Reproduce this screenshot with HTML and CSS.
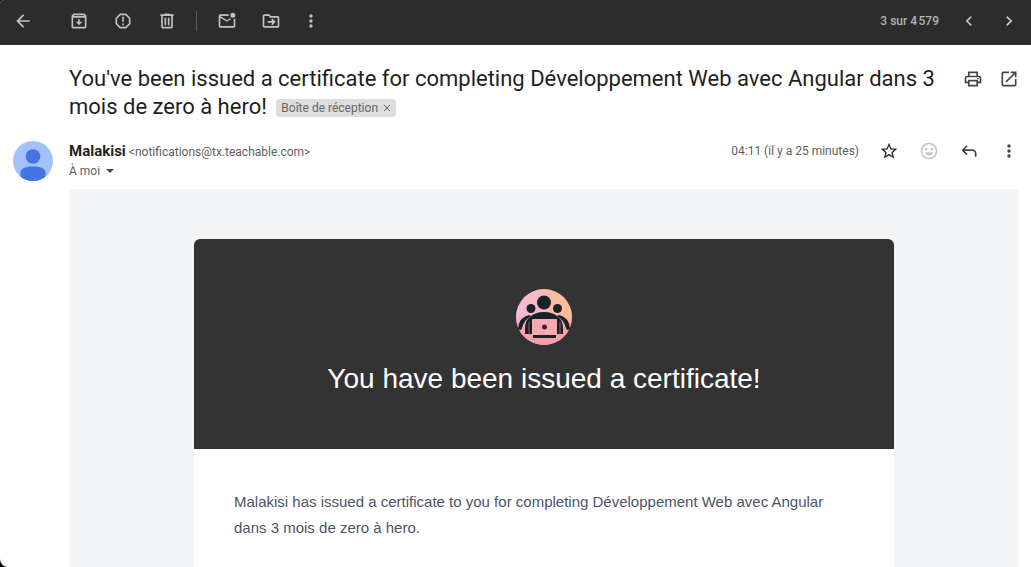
FILE: index.html
```html
<!DOCTYPE html>
<html lang="fr">

<head>
    <meta charset="UTF-8">
    <meta name="viewport" content="width=device-width, initial-scale=1.0">
    <title>Boîte de réception</title>
    <link rel="stylesheet" href="styles.css">
</head>

<body>
    <div class="window">
        <header class="toolbar">
            <button class="icon-btn back" aria-label="Retour">
                <svg viewBox="0 0 24 24"><path d="M20 11H7.83l5.59-5.59L12 4l-8 8 8 8 1.41-1.41L7.83 13H20v-2z"/></svg>
            </button>
            <button class="icon-btn" aria-label="Archiver">
                <svg viewBox="0 0 24 24"><path d="M20.54 5.23l-1.39-1.68C18.88 3.21 18.47 3 18 3H6c-.47 0-.88.21-1.16.55L3.46 5.23C3.17 5.57 3 6.02 3 6.5V19c0 1.1.9 2 2 2h14c1.1 0 2-.9 2-2V6.5c0-.48-.17-.93-.46-1.27zM6.24 5h11.52l.83 1H5.42l.82-1zM5 19V8h14v11H5zm8-9h-2v3H8l4 4 4-4h-3v-3z"/></svg>
            </button>
            <button class="icon-btn" aria-label="Signaler comme spam">
                <svg viewBox="0 0 24 24"><path d="M15.73 3H8.27L3 8.27v7.46L8.27 21h7.46L21 15.73V8.27L15.73 3zM19 14.9L14.9 19H9.1L5 14.9V9.1L9.1 5h5.8L19 9.1v5.8zM11 7h2v6h-2zm0 8h2v2h-2z"/></svg>
            </button>
            <button class="icon-btn" aria-label="Supprimer">
                <svg viewBox="0 0 24 24"><path d="M15 4V3H9v1H4v2h1v13c0 1.1.9 2 2 2h10c1.1 0 2-.9 2-2V6h1V4h-5zm2 15H7V6h10v13zM9 8h2v9H9zm4 0h2v9h-2z"/></svg>
            </button>
            <span class="separator"></span>
            <button class="icon-btn" aria-label="Marquer comme non lu">
                <svg viewBox="0 0 24 24"><path d="M22 8.98V18c0 1.1-.9 2-2 2H4c-1.1 0-2-.9-2-2V6c0-1.1.9-2 2-2h10.1a5 5 0 0 0 0 2H4l8 5 3.67-2.29c.47.43 1.02.76 1.63.98L12 13 4 8v10h16V9.9c.74-.15 1.42-.48 2-.92zM16 5a3 3 0 1 0 6 0 3 3 0 0 0-6 0z"/></svg>
            </button>
            <button class="icon-btn" aria-label="Déplacer vers">
                <svg viewBox="0 0 24 24"><path d="M20 6h-8l-2-2H4c-1.1 0-2 .9-2 2v12c0 1.1.9 2 2 2h16c1.1 0 2-.9 2-2V8c0-1.1-.9-2-2-2zm0 12H4V6h5.17l2 2H20v10zm-7.84-2.01L13.59 17 17.59 13l-4-4-1.42 1.41L13.76 12H8v2h5.76l-1.6 1.99z"/></svg>
            </button>
            <button class="icon-btn narrow" aria-label="Plus">
                <svg viewBox="0 0 24 24"><path d="M12 8c1.1 0 2-.9 2-2s-.9-2-2-2-2 .9-2 2 .9 2 2 2zm0 2c-1.1 0-2 .9-2 2s.9 2 2 2 2-.9 2-2-.9-2-2-2zm0 6c-1.1 0-2 .9-2 2s.9 2 2 2 2-.9 2-2-.9-2-2-2z"/></svg>
            </button>
            <nav class="pager">
                <span class="count">3 sur 4&#8239;579</span>
                <button class="icon-btn" aria-label="Plus récent">
                    <svg viewBox="0 0 24 24"><path d="M15.41 7.41L14 6l-6 6 6 6 1.41-1.41L10.83 12z"/></svg>
                </button>
                <button class="icon-btn" aria-label="Plus ancien">
                    <svg viewBox="0 0 24 24"><path d="M10 6L8.59 7.41 13.17 12l-4.58 4.59L10 18l6-6z"/></svg>
                </button>
            </nav>
        </header>

        <main class="mail">
            <div class="subject-row">
                <div class="subject-box">
                    <h1 class="subject">You've been issued a certificate for completing Développement Web avec Angular dans 3 mois de zero à hero!</h1>
                    <span class="label">Boîte de réception <button class="label-close" aria-label="Retirer le libellé"><svg viewBox="0 0 8 8"><path d="M1 1l6 6M7 1L1 7"/></svg></button></span>
                </div>
                <div class="subject-actions">
                    <button class="icon-btn" aria-label="Imprimer">
                        <svg viewBox="0 0 24 24"><path d="M19 8h-1V3H6v5H5c-1.66 0-3 1.34-3 3v6h4v4h12v-4h4v-6c0-1.66-1.34-3-3-3zM8 5h8v3H8V5zm8 14H8v-4h8v4zm2-4v-2H6v2H4v-4c0-.55.45-1 1-1h14c.55 0 1 .45 1 1v4h-2z"/><circle cx="18" cy="11.5" r="1"/></svg>
                    </button>
                    <button class="icon-btn" aria-label="Nouvelle fenêtre">
                        <svg viewBox="0 0 24 24"><path d="M19 19H5V5h7V3H5c-1.11 0-2 .9-2 2v14c0 1.1.89 2 2 2h14c1.1 0 2-.9 2-2v-7h-2v7zM14 3v2h3.59l-9.83 9.83 1.41 1.41L19 6.41V10h2V3h-7z"/></svg>
                    </button>
                </div>
            </div>

            <div class="sender-row">
                <svg class="avatar" viewBox="0 0 40 40">
                    <clipPath id="avatar-clip"><circle cx="20" cy="20" r="20"/></clipPath>
                    <circle cx="20" cy="20" r="20" fill="#a1c2fa"/>
                    <g fill="#4374e0" clip-path="url(#avatar-clip)">
                        <circle cx="20" cy="15.5" r="7.3"/>
                        <path d="M7.5 40V31.5C7.5 27 14 25.5 20 25.5S32.5 27 32.5 31.5V40z"/>
                    </g>
                </svg>
                <div class="sender">
                    <div class="from"><strong class="name">Malakisi</strong> <span class="address">&lt;notifications@tx.teachable.com&gt;</span></div>
                    <button class="to">À moi <span class="caret"></span></button>
                </div>
                <span class="date">04:11 (il y a 25 minutes)</span>
                <button class="icon-btn star" aria-label="Suivre">
                    <svg viewBox="0 0 24 24"><path d="M22 9.24l-7.19-.62L12 2 9.19 8.63 2 9.24l5.46 4.73L5.82 21 12 17.27 18.18 21l-1.63-7.03L22 9.24zM12 15.4l-3.76 2.27 1-4.28-3.32-2.88 4.38-.38L12 6.1l1.71 4.04 4.38.38-3.32 2.88 1 4.28L12 15.4z"/></svg>
                </button>
                <button class="icon-btn muted" aria-label="Ajouter une réaction">
                    <svg viewBox="0 0 24 24"><path d="M12 2a10 10 0 1 0 0 20 10 10 0 0 0 0-20zm0 18a8 8 0 1 1 0-16 8 8 0 0 1 0 16z"/><circle cx="8.5" cy="9.5" r="1.5"/><circle cx="15.5" cy="9.5" r="1.5"/><path d="M7 13.5h10c-.6 2.2-2.6 3.8-5 3.8s-4.4-1.6-5-3.8z"/></svg>
                </button>
                <button class="icon-btn" aria-label="Répondre">
                    <svg viewBox="0 0 24 24"><path d="M19 19v-4q0-1.25-.875-2.125T16 12H6.825l3.6 3.6L9 17l-6-6 6-6 1.425 1.4-3.6 3.6H16q2.075 0 3.538 1.463T21 15v4z"/></svg>
                </button>
                <button class="icon-btn" aria-label="Autres options">
                    <svg viewBox="0 0 24 24"><path d="M12 8c1.1 0 2-.9 2-2s-.9-2-2-2-2 .9-2 2 .9 2 2 2zm0 2c-1.1 0-2 .9-2 2s.9 2 2 2 2-.9 2-2-.9-2-2-2zm0 6c-1.1 0-2 .9-2 2s.9 2 2 2 2-.9 2-2-.9-2-2-2z"/></svg>
                </button>
            </div>

            <div class="content">
                <article class="card">
                    <div class="hero">
                        <svg class="logo" viewBox="0 0 56 56">
                            <defs>
                                <linearGradient id="logo-bg" x1="0" y1=".3" x2="1" y2=".1">
                                    <stop offset="0" stop-color="#f3bde0"/>
                                    <stop offset=".5" stop-color="#f8b9b9"/>
                                    <stop offset="1" stop-color="#fbc486"/>
                                </linearGradient>
                                <linearGradient id="logo-low" x1="0" y1="0" x2="0" y2="1">
                                    <stop offset=".4" stop-color="#fa9da5" stop-opacity="0"/>
                                    <stop offset=".8" stop-color="#fa9da5"/>
                                </linearGradient>
                            </defs>
                            <circle cx="28" cy="28" r="28" fill="url(#logo-bg)"/>
                            <circle cx="28" cy="28" r="28" fill="url(#logo-low)"/>
                            <g fill="#1a2229">
                                <circle cx="28" cy="13.5" r="7"/>
                                <circle cx="15" cy="19.5" r="4.5"/>
                                <circle cx="41.5" cy="19.5" r="4.5"/>
                                <path d="M15 27Q20 23 28 23t13 4q6 4 6 12v6H9v-6q0-8 6-12z"/>
                                <path d="M2 40q1-12 11-14l2 1q-7 4-9 12l-1 2zM54 40q-1-12-11-14l-2 1q7 4 9 12l1 2z"/>
                                <rect x="17" y="46" width="23" height="3"/>
                            </g>
                            <rect x="16" y="30" width="25" height="16" rx="1" fill="#fba9b0"/>
                            <circle cx="28.5" cy="38" r="2.5" fill="#35262e"/>
                            <path d="M13 33v12M44 33v12" stroke="#80606a"/>
                        </svg>
                        <h2 class="hero-title">You have been issued a certificate!</h2>
                    </div>
                    <p class="text">Malakisi has issued a certificate to you for completing Développement Web avec Angular dans 3 mois de zero à hero.</p>
                </article>
            </div>
        </main>
    </div>
</body>

</html>
```

FILE: styles.css
```css
* {
    box-sizing: border-box;
    margin: 0;
    padding: 0;
}

body {
    background: #000;
    color: #1f1f1f;
    font-family: Roboto, "Liberation Sans", sans-serif;
}

button {
    border: 0;
    background: none;
    color: inherit;
    font: inherit;
    cursor: pointer;
}

.window {
    display: flex;
    flex-direction: column;
    min-height: 100vh;
    overflow: hidden;
    border-radius: 4px 0 0 8px;
    background: #fff;
}

.icon-btn {
    display: flex;
    flex: none;
    align-items: center;
    justify-content: center;
    width: 40px;
    height: 40px;
    color: #444746;
}

.icon-btn svg {
    width: 20px;
    height: 20px;
    fill: currentColor;
}

.muted {
    color: #c4c5c5;
}

.star {
    color: #2b2d2c;
}

/* toolbar */
.toolbar {
    display: flex;
    align-items: center;
    gap: 4px;
    height: 45px;
    padding: 0 2px 3px 3px;
    background: #2c2c2c;
}

.toolbar .icon-btn {
    color: #c2c2c2;
}

.toolbar .back {
    margin-right: 12px;
}

.toolbar .narrow {
    width: 32px;
}

.separator {
    width: 1px;
    height: 20px;
    margin: 0 6px 0 5px;
    background: #5a5a5a;
}

.pager {
    display: flex;
    align-items: center;
    margin-left: auto;
}

.count {
    margin-right: 10px;
    color: #b4b4b4;
    font-size: 12px;
    font-weight: 500;
}

/* mail */
.mail {
    display: flex;
    flex: 1;
    flex-direction: column;
}

.subject-row {
    display: flex;
    padding: 20px 4px 0 69px;
}

.subject-box {
    flex: 1;
    font-size: 22px;
    line-height: 28px;
}

.subject {
    display: inline;
    font-size: 22px;
    font-weight: 400;
}

.label {
    display: inline-flex;
    align-items: center;
    gap: 5px;
    height: 18px;
    margin-left: 4px;
    padding: 0 5px;
    border-radius: 4px;
    background: #ddd;
    color: #666;
    font-size: 12px;
    line-height: 18px;
    vertical-align: middle;
}

.label-close {
    display: flex;
}

.label-close svg {
    width: 8px;
    height: 8px;
    fill: none;
    stroke: #666;
}

.subject-actions {
    display: flex;
}

.subject-actions .icon-btn {
    width: 36px;
    height: 28px;
}

.sender-row {
    display: flex;
    align-items: flex-start;
    padding: 20px 2px 8px 13px;
}

.sender-row .icon-btn {
    height: 20px;
}

.avatar {
    flex: none;
    width: 40px;
    height: 40px;
}

.sender {
    flex: 1;
    margin-left: 16px;
    line-height: 20px;
}

.from {
    display: flex;
    gap: 3px;
    height: 20px;
    align-items: baseline;
}

.name {
    font-size: 15px;
}

.address,
.to,
.date {
    color: #5e5e5e;
    font-size: 12px;
    line-height: 20px;
}

.to {
    display: flex;
    align-items: center;
    gap: 6px;
}

.caret {
    border: 4px solid transparent;
    border-top-color: #444746;
    border-bottom: 0;
}

.date {
    margin-right: 10px;
}

/* message body */
.content {
    display: flex;
    flex: 1;
    justify-content: center;
    margin: 0 12px 0 69px;
    padding-top: 50px;
    background: #f4f5f7;
}

.card {
    width: 100%;
    max-width: 700px;
    overflow: hidden;
    border-radius: 6px 6px 0 0;
    background: #fff;
    font-family: "Liberation Sans", Arial, sans-serif;
}

.hero {
    display: flex;
    flex-direction: column;
    align-items: center;
    gap: 14px;
    height: 210px;
    padding-top: 50px;
    background: #333;
    color: #fff;
}

.logo {
    width: 56px;
    height: 56px;
}

.hero-title {
    font-size: 28px;
    font-weight: 400;
    line-height: 40px;
}

.text {
    padding: 40px 40px 24px;
    color: #4a5566;
    font-size: 15px;
    line-height: 26px;
}
```
